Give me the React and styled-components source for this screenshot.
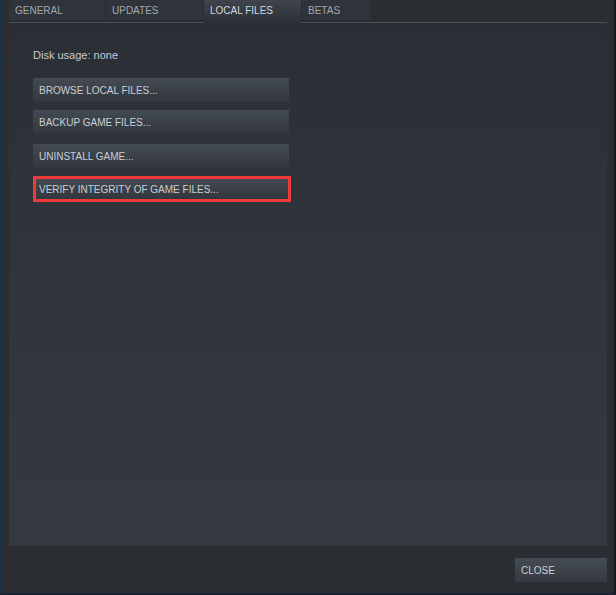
import React from 'react'
import styled, { createGlobalStyle } from 'styled-components'

const GlobalStyle = createGlobalStyle`
  html, body {
    margin: 0;
    padding: 0;
    background: #2a2d32;
  }
`

const tabs = [
  { label: 'GENERAL', width: 96 },
  { label: 'UPDATES', width: 97 },
  { label: 'LOCAL FILES', width: 97, active: true },
  { label: 'BETAS', width: 68 },
]

const actions = [
  { label: 'BROWSE LOCAL FILES...' },
  { label: 'BACKUP GAME FILES...' },
  { label: 'UNINSTALL GAME...', extra: 2 },
  { label: 'VERIFY INTEGRITY OF GAME FILES...', marked: true },
]

export default function App() {
  return (
    <>
      <GlobalStyle />
      <Window>
        <TabBar>
          {tabs.map((t) => (
            <Tab key={t.label} $active={t.active} $width={t.width}>
              {t.label}
            </Tab>
          ))}
        </TabBar>
        <Panel>
          <DiskUsage>Disk usage: none</DiskUsage>
          <Actions>
            {actions.map((a) => (
              <ActionButton key={a.label} $marked={a.marked} $extra={a.extra}>
                {a.label}
              </ActionButton>
            ))}
          </Actions>
        </Panel>
        <Footer>
          <CloseButton>CLOSE</CloseButton>
        </Footer>
      </Window>
    </>
  )
}

const Window = styled.div`
  box-sizing: border-box;
  width: 616px;
  height: 595px;
  display: flex;
  flex-direction: column;
  padding-left: 8px;
  padding-right: 7px;
  background-color: #2a2d32;
  border-left: 1px solid #1c3557;
  border-right: 2px solid #15171a;
  border-bottom: 2px solid #1b2230;
  font-family: "Liberation Sans", Arial, sans-serif;
`

const TabBar = styled.div`
  display: flex;
  gap: 1px;
  height: 23px;
  align-items: flex-start;
  border-bottom: 1px solid #4a5059;
  box-sizing: border-box;
`

const Tab = styled.div`
  box-sizing: border-box;
  width: ${(p) => p.$width}px;
  height: ${(p) => (p.$active ? '23px' : '20px')};
  padding: 5px 0 0 6px;
  font-size: 10px;
  color: ${(p) => (p.$active ? '#d2d7de' : '#a3a9b1')};
  background: ${(p) =>
    p.$active
      ? 'linear-gradient(to bottom, #40454d, #2c3036)'
      : '#2f333a'};
  margin-bottom: ${(p) => (p.$active ? '-1px' : '0')};
`

const Panel = styled.div`
  flex: 1;
  display: flex;
  flex-direction: column;
  padding: 26px 0 0 24px;
  background: linear-gradient(to bottom, #2b2f35, #353a42);
`

const DiskUsage = styled.div`
  font-size: 11px;
  color: #c5cad1;
  height: 14px;
`

const Actions = styled.div`
  display: flex;
  flex-direction: column;
  align-items: flex-start;
  gap: 8px;
  margin-top: 15px;
`

const ActionButton = styled.div`
  box-sizing: border-box;
  width: ${(p) => (p.$marked ? '258px' : '256px')};
  height: ${(p) => (p.$marked ? '26px' : '24px')};
  display: flex;
  align-items: center;
  padding-left: ${(p) => (p.$marked ? '3px' : '6px')};
  margin-top: ${(p) => p.$extra || 0}px;
  font-size: 10px;
  color: #c9cfd7;
  background: linear-gradient(to bottom, #444a53, #32373e);
  border: ${(p) => (p.$marked ? '3px solid #f03a3a' : 'none')};
`

const Footer = styled.div`
  height: 47px;
  display: flex;
  justify-content: flex-end;
  align-items: flex-start;
  padding-top: 12px;
  box-sizing: border-box;
`

const CloseButton = styled.div`
  box-sizing: border-box;
  width: 92px;
  height: 24px;
  display: flex;
  align-items: center;
  padding-left: 6px;
  font-size: 10px;
  color: #c9cfd7;
  background: linear-gradient(to bottom, #454b54, #353a41);
`
